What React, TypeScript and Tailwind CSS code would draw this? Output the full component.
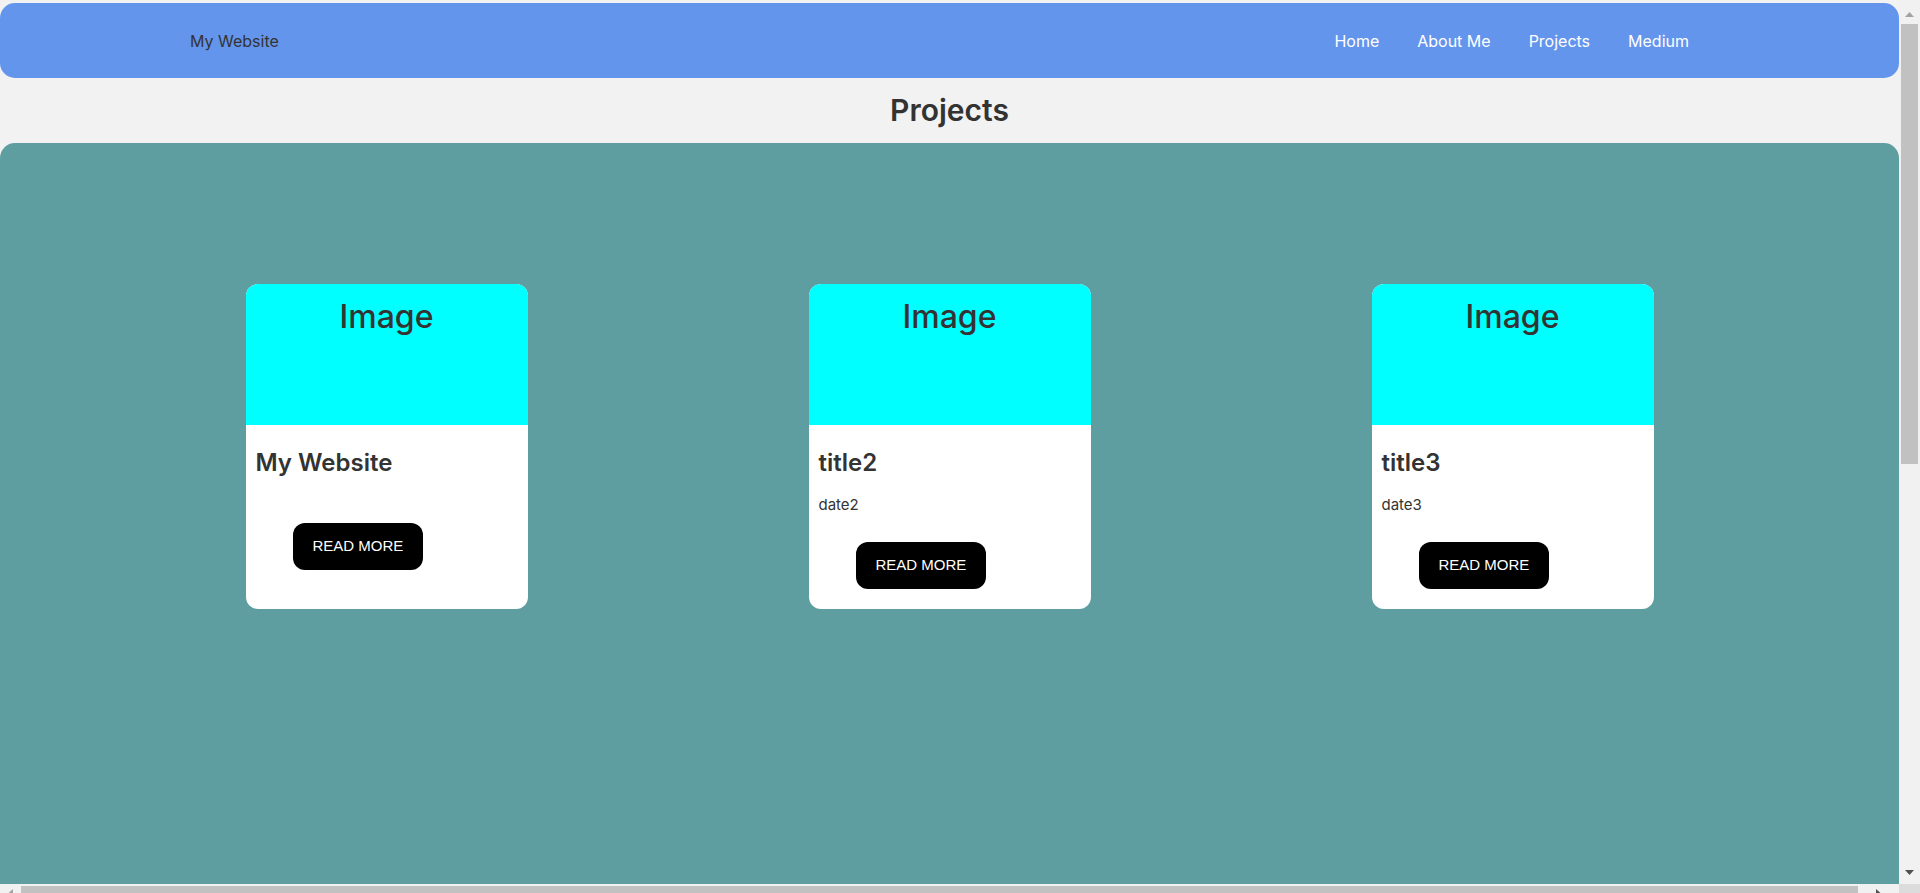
import React from "react";

const font = { fontFamily: "Inter, 'Noto Sans', sans-serif" };

function Card({ title, date }: { title: string; date?: string }) {
  return (
    <div className="w-[282px] bg-white rounded-[12px] overflow-hidden flex flex-col text-[#333]">
      <div className="h-[141px] bg-[#00ffff] pt-[17px] text-center">
        <div className="text-[32px] leading-[32px] font-medium">Image</div>
      </div>
      <div className="pl-[10px] pt-[26px] pb-[20px] flex flex-col items-start">
        <div className="text-[24px] leading-[24px] font-semibold">{title}</div>
        {date ? (
          <div className="mt-[22px] text-[15px] leading-[15px]">{date}</div>
        ) : null}
        <button
          className={
            (date ? "mt-[30px]" : "mt-[48px]") +
            " ml-[37px] h-[47px] px-5 flex items-center rounded-[12px] bg-black text-white text-[15px]"
          }
          style={{ fontFamily: "'Liberation Sans', Arial, sans-serif" }}
        >
          READ MORE
        </button>
      </div>
    </div>
  );
}

function Tri({ dir, color }: { dir: "up" | "down" | "left" | "right"; color: string }) {
  const pts =
    dir === "up"
      ? "0,5 4.5,0 9,5"
      : dir === "down"
      ? "0,0 9,0 4.5,5"
      : dir === "left"
      ? "5,0 5,9 0,4.5"
      : "0,0 0,9 5,4.5";
  const w = dir === "up" || dir === "down" ? 9 : 5;
  const h = dir === "up" || dir === "down" ? 5 : 9;
  return (
    <svg width={w} height={h} viewBox={`0 0 ${w} ${h}`} className="block shrink-0">
      <polygon points={pts} fill={color} />
    </svg>
  );
}

export default function App() {
  return (
    <div className="w-[1920px] h-[893px] overflow-hidden flex flex-col bg-[#f2f2f2]" style={font}>
      <div className="flex h-[884px] shrink-0">
        <main className="w-[1899px] h-[884px] overflow-hidden pt-[3px]">
          <nav className="h-[75px] bg-[#6495ed] rounded-[15px] flex items-center justify-between pl-[190px] pr-[210px] text-[16px]">
            <div className="text-[#333]">My Website</div>
            <div className="flex gap-[38px] text-white">
              <span>Home</span>
              <span>About Me</span>
              <span>Projects</span>
              <span>Medium</span>
            </div>
          </nav>
          <div className="h-[65px] flex items-center justify-center">
            <h1 className="text-[30px] font-semibold text-[#333]">Projects</h1>
          </div>
          <section className="h-[1567px] bg-[#5f9ea0] rounded-[15px] pt-[141px] flex justify-center items-start">
            <div className="flex gap-[281px] items-stretch">
              <Card title="My Website" />
              <Card title="title2" date="date2" />
              <Card title="title3" date="date3" />
            </div>
          </section>
        </main>
        <div className="w-[21px] h-[884px] bg-[#f1f1f1] flex flex-col items-center">
          <div className="pt-[12px] h-[24px]">
            <Tri dir="up" color="#a3a3a3" />
          </div>
          <div className="w-[17px] h-[440px] bg-[#c1c1c1]" />
          <div className="flex-1" />
          <div className="pb-[9px]">
            <Tri dir="down" color="#505050" />
          </div>
        </div>
      </div>
      <div className="flex h-[9px] shrink-0">
        <div className="w-[1899px] bg-[#f1f1f1] flex items-start">
          <div className="w-[21px] pt-[5px] flex justify-center">
            <Tri dir="left" color="#a3a3a3" />
          </div>
          <div className="mt-[2px] w-[1837px] h-[7px] bg-[#c1c1c1]" />
          <div className="flex-1 pt-[5px] flex justify-center">
            <Tri dir="right" color="#505050" />
          </div>
        </div>
        <div className="w-[21px] bg-[#dcdcdc]" />
      </div>
    </div>
  );
}
